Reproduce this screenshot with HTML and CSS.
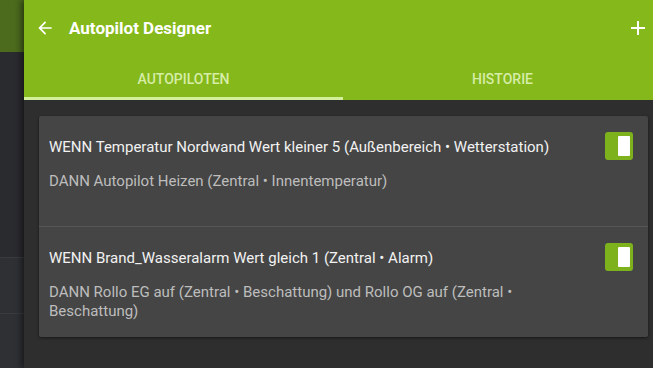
FILE: index.html
```html
<!DOCTYPE html>
<html lang="de">
<head>
    <meta charset="UTF-8">
    <meta name="viewport" content="width=device-width, initial-scale=1.0">
    <title>Autopilot Designer</title>
    <link rel="stylesheet" href="styles.css">
</head>
<body>
    <div class="side">
        <div class="side-top"></div>
        <div class="side-mid"></div>
        <div class="side-row"></div>
        <div class="side-row"></div>
    </div>

    <div class="panel">
        <div class="header">
            <div class="toolbar">
                <svg class="icon" width="20" height="20" viewBox="0 0 24 24">
                    <path d="M20 11H7.83l5.59-5.59L12 4l-8 8 8 8 1.41-1.41L7.83 13H20v-2z" fill="#fff"/>
                </svg>
                <span class="title">Autopilot Designer</span>
                <svg class="icon add" width="24" height="24" viewBox="0 0 24 24">
                    <path d="M19 13h-6v6h-2v-6H5v-2h6V5h2v6h6v2z" fill="#fff"/>
                </svg>
            </div>
            <div class="tabs">
                <div class="tab active">Autopiloten</div>
                <div class="tab">Historie</div>
            </div>
        </div>

        <div class="content">
            <div class="card">
                <div class="item">
                    <div class="text">
                        <div class="when">WENN Temperatur Nordwand Wert kleiner 5 (Außenbereich • Wetterstation)</div>
                        <div class="then">DANN Autopilot Heizen (Zentral • Innentemperatur)</div>
                    </div>
                    <div class="toggle"><span></span></div>
                </div>
                <div class="item">
                    <div class="text">
                        <div class="when">WENN Brand_Wasseralarm Wert gleich 1 (Zentral • Alarm)</div>
                        <div class="then">DANN Rollo EG auf (Zentral • Beschattung) und Rollo OG auf (Zentral • Beschattung)</div>
                    </div>
                    <div class="toggle"><span></span></div>
                </div>
            </div>
        </div>
    </div>
</body>
</html>
```

FILE: styles.css
```css
html, body {
    margin: 0;
    height: 100%;
}
body {
    font-family: Roboto, "Liberation Sans", sans-serif;
    display: flex;
    overflow: hidden;
    background: #2a2b2f;
}
.side {
    width: 24px;
    flex-shrink: 0;
    display: flex;
    flex-direction: column;
}
.side-top {
    height: 56px;
    background: #4c6b1d;
}
.side-mid {
    height: 223px;
    background: #2a2b2f;
}
.side-row {
    height: 59px;
    background: #2f3034;
    border-top: 1px solid #3a3b3f;
}
.panel {
    width: 638px;
    flex-shrink: 0;
    background: #2e2e2f;
    box-shadow: -3px 0 6px rgba(0, 0, 0, 0.45);
    display: flex;
    flex-direction: column;
}
.header {
    background: #85b81a;
}
.toolbar {
    height: 56px;
    display: flex;
    align-items: center;
    padding: 0 12px 0 11px;
}
.icon {
    display: block;
}
.title {
    color: #fff;
    font-size: 17px;
    font-weight: bold;
    margin-left: 14px;
    flex: 1;
}
.tabs {
    display: flex;
    height: 44px;
}
.tab {
    flex: 1;
    text-align: center;
    text-transform: uppercase;
    font-size: 14px;
    font-weight: 500;
    color: #d6eda8;
    padding-top: 15px;
    box-sizing: border-box;
    border-bottom: 3px solid transparent;
}
.tab.active {
    border-bottom-color: #d3ef9b;
}
.content {
    padding: 16px 14px 16px 15px;
}
.card {
    background: #454545;
    border-radius: 2px;
    box-shadow: 0 1px 3px rgba(0, 0, 0, 0.5);
}
.item {
    display: flex;
    min-height: 110px;
    box-sizing: border-box;
    padding: 16px 15px 16px 10px;
}
.item + .item {
    border-top: 1px solid #575757;
}
.text {
    flex: 1;
    padding-top: 6px;
}
.when {
    color: #f2f2f2;
    font-size: 15px;
    line-height: 18px;
}
.then {
    color: #bdbdbd;
    font-size: 15px;
    line-height: 19px;
    margin-top: 16px;
}
.toggle {
    width: 28px;
    height: 28px;
    margin-left: 16px;
    background: #7db21c;
    border-radius: 3px;
    flex-shrink: 0;
    display: flex;
    justify-content: flex-end;
    align-items: center;
    padding-right: 3px;
    box-sizing: border-box;
}
.toggle span {
    width: 12px;
    height: 20px;
    background: #fff;
    border-radius: 1px;
}
```
